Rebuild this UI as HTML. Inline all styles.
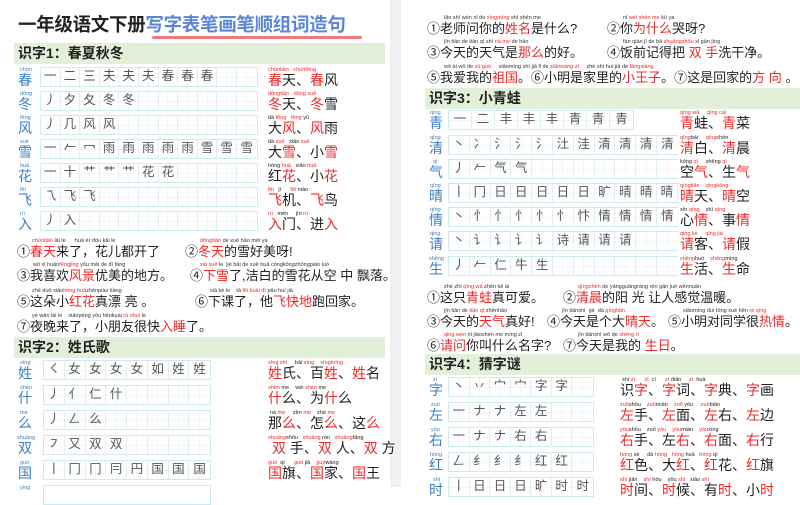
<!DOCTYPE html>
<html><head><meta charset="utf-8"><style>
*{margin:0;padding:0;box-sizing:border-box}
body{width:800px;height:487px;overflow:hidden;background:#fff;font-family:"Liberation Sans","Noto Sans CJK SC",sans-serif;position:relative;color:#222}
.a{position:absolute;white-space:nowrap}
.div{position:absolute;left:390px;top:0;width:11px;height:487px;background:#eef0f3}
.hd{position:absolute;background:#e2efd9;height:21px;font-weight:bold;font-size:14px;line-height:21px;padding-left:4px;color:#222}
.r{position:absolute;height:20px}
.py{position:absolute;top:0px;font-size:5.5px;line-height:6px;color:#3a7fc8;white-space:nowrap}
.hz{position:absolute;top:5px;font-size:14px;color:#3a7fc8;line-height:16px}
.g{position:absolute;top:0;height:20px;display:flex;border:1.5px solid #cfe9f0;background:#fff}
.g span{display:block;height:100%;border-right:1px solid #dcf0f4;font-size:12.5px;line-height:17px;text-align:center;color:#555;
background:linear-gradient(#f0f7f9,#f0f7f9) center/100% 1px no-repeat,linear-gradient(#f0f7f9,#f0f7f9) center/1px 100% no-repeat}
.w{position:absolute;top:5px;font-size:14px;line-height:16px;white-space:nowrap;color:#222}
.wp{position:absolute;top:0px;font-size:5.5px;line-height:6px;white-space:nowrap;color:#222}
.x{color:#f02828}
.s{position:absolute;font-size:13px;white-space:nowrap;line-height:16px;color:#222}
.sp{position:absolute;font-size:5.5px;white-space:nowrap;color:#333}
</style></head><body>
<div class="div"></div>

<!-- LEFT PAGE -->
<div class="a" style="left:18px;top:14px;font-size:18.5px;font-weight:bold;line-height:22px;letter-spacing:-0.3px">一年级语文下册<span style="color:#5a86d8">写字表笔画笔顺组词造句</span></div>
<div class="a" style="left:152px;top:36px;width:210px;height:3px;background:#f07a7a;border-radius:2px"></div>
<div class="hd" style="left:14px;top:43px;width:371px">识字1：春夏秋冬</div>

<div class="r" style="left:0;top:67px;width:390px"><div class="py" style="left:20px">chūn</div><div class="hz" style="left:18px">春</div>
<div class="g" style="left:40px;width:218px"><span style="width:19.6px">一</span><span style="width:19.6px">二</span><span style="width:19.6px">三</span><span style="width:19.6px">夫</span><span style="width:19.6px">夫</span><span style="width:19.6px">夫</span><span style="width:19.6px">春</span><span style="width:19.6px">春</span><span style="width:19.6px">春</span><span style="width:19.6px"></span><span style="width:19.6px;border:0"></span></div>
<div class="wp x" style="left:268px">chūntiān&nbsp;&nbsp;&nbsp;chūnfēng</div><div class="w" style="left:268px"><span class="x">春</span>天、<span class="x">春</span>风</div></div>

<div class="r" style="left:0;top:91px;width:390px"><div class="py" style="left:20px">dōng</div><div class="hz" style="left:18px">冬</div>
<div class="g" style="left:40px;width:218px"><span style="width:19.6px">丿</span><span style="width:19.6px">夕</span><span style="width:19.6px">夂</span><span style="width:19.6px">冬</span><span style="width:19.6px">冬</span><span style="width:19.6px"></span><span style="width:19.6px"></span><span style="width:19.6px"></span><span style="width:19.6px"></span><span style="width:19.6px"></span><span style="width:19.6px;border:0"></span></div>
<div class="wp x" style="left:268px">dōngtiān&nbsp;&nbsp;&nbsp;dōng xuě</div><div class="w" style="left:268px"><span class="x">冬</span>天、<span class="x">冬</span>雪</div></div>

<div class="r" style="left:0;top:115px;width:390px"><div class="py" style="left:20px">fēng</div><div class="hz" style="left:18px">风</div>
<div class="g" style="left:40px;width:218px"><span style="width:19.6px">丿</span><span style="width:19.6px">几</span><span style="width:19.6px">风</span><span style="width:19.6px">风</span><span style="width:19.6px"></span><span style="width:19.6px"></span><span style="width:19.6px"></span><span style="width:19.6px"></span><span style="width:19.6px"></span><span style="width:19.6px"></span><span style="width:19.6px;border:0"></span></div>
<div class="wp" style="left:268px">dà <span class="x">fēng</span>&nbsp;&nbsp;&nbsp;<span class="x">fēng</span> yǔ</div><div class="w" style="left:268px">大<span class="x">风</span>、<span class="x">风</span>雨</div></div>

<div class="r" style="left:0;top:139px;width:390px"><div class="py" style="left:20px">xuě</div><div class="hz" style="left:18px">雪</div>
<div class="g" style="left:40px;width:218px"><span style="width:19.6px">一</span><span style="width:19.6px">𠂉</span><span style="width:19.6px">冖</span><span style="width:19.6px">雨</span><span style="width:19.6px">雨</span><span style="width:19.6px">雨</span><span style="width:19.6px">雨</span><span style="width:19.6px">雨</span><span style="width:19.6px">雪</span><span style="width:19.6px">雪</span><span style="width:19.6px;border:0">雪</span></div>
<div class="wp" style="left:268px">dà <span class="x">xuě</span>&nbsp;&nbsp;&nbsp;xiǎo <span class="x">xuě</span></div><div class="w" style="left:268px">大<span class="x">雪</span>、小<span class="x">雪</span></div></div>

<div class="r" style="left:0;top:163px;width:390px"><div class="py" style="left:20px">huā</div><div class="hz" style="left:18px">花</div>
<div class="g" style="left:40px;width:218px"><span style="width:19.6px">一</span><span style="width:19.6px">十</span><span style="width:19.6px">艹</span><span style="width:19.6px">艹</span><span style="width:19.6px">艹</span><span style="width:19.6px">花</span><span style="width:19.6px">花</span><span style="width:19.6px"></span><span style="width:19.6px"></span><span style="width:19.6px"></span><span style="width:19.6px;border:0"></span></div>
<div class="wp" style="left:268px">hóng <span class="x">huā</span>&nbsp;&nbsp;&nbsp;xiǎo <span class="x">huā</span></div><div class="w" style="left:268px">红<span class="x">花</span>、小<span class="x">花</span></div></div>

<div class="r" style="left:0;top:187px;width:390px"><div class="py" style="left:20px">fēi</div><div class="hz" style="left:18px">飞</div>
<div class="g" style="left:40px;width:218px"><span style="width:19.6px">乁</span><span style="width:19.6px">飞</span><span style="width:19.6px">飞</span><span style="width:19.6px"></span><span style="width:19.6px"></span><span style="width:19.6px"></span><span style="width:19.6px"></span><span style="width:19.6px"></span><span style="width:19.6px"></span><span style="width:19.6px"></span><span style="width:19.6px;border:0"></span></div>
<div class="wp" style="left:268px"><span class="x">fēi</span>&nbsp;&nbsp; jī&nbsp;&nbsp;&nbsp;&nbsp;&nbsp;&nbsp;<span class="x">fēi</span> niǎo</div><div class="w" style="left:268px"><span class="x">飞</span>机、<span class="x">飞</span>鸟</div></div>

<div class="r" style="left:0;top:211px;width:390px"><div class="py" style="left:20px">rù</div><div class="hz" style="left:18px">入</div>
<div class="g" style="left:40px;width:218px"><span style="width:19.6px">丿</span><span style="width:19.6px">入</span><span style="width:19.6px"></span><span style="width:19.6px"></span><span style="width:19.6px"></span><span style="width:19.6px"></span><span style="width:19.6px"></span><span style="width:19.6px"></span><span style="width:19.6px"></span><span style="width:19.6px"></span><span style="width:19.6px;border:0"></span></div>
<div class="wp" style="left:268px"><span class="x">rù</span>&nbsp;&nbsp; mén&nbsp;&nbsp;&nbsp;&nbsp;&nbsp;jìn <span class="x">rù</span></div><div class="w" style="left:268px"><span class="x">入</span>门、进<span class="x">入</span></div></div>

<!-- left sentences -->
<div class="sp" style="left:32px;top:238px"><span class="x">chūntiān</span> lái le&nbsp;&nbsp;&nbsp;&nbsp;&nbsp;&nbsp;huā ér dōu kāi le</div>
<div class="s" style="left:17px;top:244px">①<span class="x">春天</span>来了，花儿都开了</div>
<div class="sp" style="left:200px;top:238px"><span class="x">dōngtiān</span> de xuě hǎo měi ya</div>
<div class="s" style="left:185px;top:244px">②<span class="x">冬天</span>的雪好美呀!</div>

<div class="sp" style="left:33px;top:262px">wǒ xǐ huān<span class="x">fēngjǐng</span> yōu měi de dì fāng</div>
<div class="s" style="left:17px;top:268px">③我喜欢<span class="x">风景</span>优美的地方。</div>
<div class="sp" style="left:200px;top:262px"><span class="x">xià xuě</span> le&nbsp;&nbsp;jié bái de xuě huā cóngkōngzhōngpiāo luò</div>
<div class="s" style="left:190px;top:268px">④<span class="x">下雪</span>了,洁白的雪花从空 中 飘落。</div>

<div class="sp" style="left:32px;top:288px">zhè duǒ xiǎo<span class="x">hóng huā</span>zhēnpiào liàng</div>
<div class="s" style="left:17px;top:294px">⑤这朵小<span class="x">红花</span>真漂 亮 。</div>
<div class="sp" style="left:210px;top:288px">xià kè le&nbsp;&nbsp;&nbsp;&nbsp;tā <span class="x">fēi kuài dì</span> pǎo huí jiā</div>
<div class="s" style="left:195px;top:294px">⑥下课了，他<span class="x">飞快地</span>跑回家。</div>

<div class="sp" style="left:32px;top:313px">yè wǎn lái le&nbsp;&nbsp;&nbsp;&nbsp;xiǎopéng yǒu hěnkuài <span class="x">rù shuì</span> le</div>
<div class="s" style="left:17px;top:319px">⑦夜晚来了，小朋友很快<span class="x">入睡</span>了。</div>

<div class="hd" style="left:14px;top:337px;width:371px">识字2：姓氏歌</div>

<div class="r" style="left:0;top:360px;width:390px"><div class="py" style="left:20px">xìng</div><div class="hz" style="left:18px">姓</div>
<div class="g" style="left:43px;width:168px"><span style="width:20.8px">㇛</span><span style="width:20.8px">女</span><span style="width:20.8px">女</span><span style="width:20.8px">女</span><span style="width:20.8px">女</span><span style="width:20.8px">如</span><span style="width:20.8px">姓</span><span style="width:20.8px;border:0">姓</span></div>
<div class="wp x" style="left:268px">xìng shì&nbsp;&nbsp;&nbsp;&nbsp;&nbsp;<span style="color:#222">bǎi</span> xìng&nbsp;&nbsp;&nbsp;&nbsp;xìngmíng</div><div class="w" style="left:268px"><span class="x">姓</span>氏、百<span class="x">姓</span>、<span class="x">姓</span>名</div></div>

<div class="r" style="left:0;top:385px;width:390px"><div class="py" style="left:20px">shén</div><div class="hz" style="left:18px">什</div>
<div class="g" style="left:43px;width:168px"><span style="width:20.8px">丿</span><span style="width:20.8px">亻</span><span style="width:20.8px">仁</span><span style="width:20.8px">什</span><span style="width:20.8px"></span><span style="width:20.8px"></span><span style="width:20.8px"></span><span style="width:20.8px;border:0"></span></div>
<div class="wp" style="left:268px"><span class="x">shén</span> me&nbsp;&nbsp;&nbsp;&nbsp;wèi <span class="x">shén</span> me</div><div class="w" style="left:268px"><span class="x">什</span>么、为<span class="x">什</span>么</div></div>

<div class="r" style="left:0;top:410px;width:390px"><div class="py" style="left:20px">me</div><div class="hz" style="left:18px">么</div>
<div class="g" style="left:43px;width:168px"><span style="width:20.8px">丿</span><span style="width:20.8px">𠃋</span><span style="width:20.8px">么</span><span style="width:20.8px"></span><span style="width:20.8px"></span><span style="width:20.8px"></span><span style="width:20.8px"></span><span style="width:20.8px;border:0"></span></div>
<div class="wp" style="left:270px">nà <span class="x">me</span>&nbsp;&nbsp;&nbsp;&nbsp;&nbsp;zěn <span class="x">me</span>&nbsp;&nbsp;&nbsp;&nbsp;zhè <span class="x">me</span></div><div class="w" style="left:268px">那<span class="x">么</span>、怎<span class="x">么</span>、这<span class="x">么</span></div></div>

<div class="r" style="left:0;top:435px;width:390px"><div class="py" style="left:17px">shuāng</div><div class="hz" style="left:18px">双</div>
<div class="g" style="left:43px;width:168px"><span style="width:20.8px">㇇</span><span style="width:20.8px">又</span><span style="width:20.8px">双</span><span style="width:20.8px">双</span><span style="width:20.8px"></span><span style="width:20.8px"></span><span style="width:20.8px"></span><span style="width:20.8px;border:0"></span></div>
<div class="wp" style="left:268px"><span class="x">shuāng</span>shǒu&nbsp;&nbsp;&nbsp;<span class="x">shuāng</span> rén&nbsp;&nbsp;&nbsp;<span class="x">shuāng</span>fāng</div><div class="w" style="left:272px"><span class="x">双</span> 手、<span class="x">双</span> 人、<span class="x">双</span> 方</div></div>

<div class="r" style="left:0;top:460px;width:390px"><div class="py" style="left:20px">guó</div><div class="hz" style="left:18px">国</div>
<div class="g" style="left:43px;width:168px"><span style="width:20.8px">丨</span><span style="width:20.8px">冂</span><span style="width:20.8px">冂</span><span style="width:20.8px">冃</span><span style="width:20.8px">円</span><span style="width:20.8px">国</span><span style="width:20.8px">国</span><span style="width:20.8px;border:0">国</span></div>
<div class="wp" style="left:268px"><span class="x">guó</span>&nbsp;&nbsp;qí&nbsp;&nbsp;&nbsp;&nbsp;&nbsp;&nbsp;<span class="x">guó</span> jiā&nbsp;&nbsp;&nbsp;&nbsp;<span class="x">guó</span>wáng</div><div class="w" style="left:268px"><span class="x">国</span>旗、<span class="x">国</span>家、<span class="x">国</span>王</div></div>

<div class="r" style="left:0;top:485px;width:390px"><div class="py" style="left:20px">yǐng</div>
<div class="g" style="left:43px;width:168px"></div></div>

<!-- RIGHT PAGE -->
<div class="sp" style="left:444px;top:15px">lǎo shī wèn nǐ de <span class="x">xìngmíng</span> shì shén me</div>
<div class="s" style="left:427px;top:21px">①老师问你的<span class="x">姓名</span>是什么?</div>
<div class="sp" style="left:623px;top:15px">nǐ <span class="x">wèi shén me</span> kū ya</div>
<div class="s" style="left:607px;top:21px">②你<span class="x">为什么</span>哭呀?</div>

<div class="sp" style="left:444px;top:39px">jīn tiān de tiān qì shì <span class="x">nà me</span> de hǎo</div>
<div class="s" style="left:427px;top:45px">③今天的天气是<span class="x">那么</span>的好。</div>
<div class="sp" style="left:623px;top:39px">fàn qián jì de bǎ <span class="x">shuāngshǒu</span> xǐ gān jìng</div>
<div class="s" style="left:607px;top:45px">④饭前记得把 <span class="x">双 手</span>洗干净。</div>

<div class="sp" style="left:444px;top:64px">wǒ ài wǒ de <span class="x">zǔ guó</span>&nbsp;&nbsp;&nbsp;&nbsp;&nbsp;xiǎomíng shì jiā lǐ de <span class="x">xiǎowáng zǐ</span>&nbsp;&nbsp;&nbsp;&nbsp;&nbsp;zhè shì huí jiā de <span class="x">fāngxiàng</span></div>
<div class="s" style="left:427px;top:70px">⑤我爱我的<span class="x">祖国</span>。⑥小明是家里的<span class="x">小王子</span>。⑦这是回家的<span class="x">方 向</span> 。</div>

<div class="hd" style="left:425px;top:88px;width:375px">识字3：小青蛙</div>

<div class="r" style="left:400px;top:110px;width:400px"><div class="py" style="left:30px">qīng</div><div class="hz" style="left:29px">青</div>
<div class="g" style="left:48px;width:186px"><span style="width:23px">一</span><span style="width:23px">二</span><span style="width:23px">丰</span><span style="width:23px">丰</span><span style="width:23px">丰</span><span style="width:23px">青</span><span style="width:23px">青</span><span style="width:23px;border:0">青</span></div>
<div class="wp x" style="left:280px">qīng wā&nbsp;&nbsp;&nbsp;&nbsp;&nbsp;qīng cài</div><div class="w" style="left:280px"><span class="x">青</span>蛙、<span class="x">青</span>菜</div></div>

<div class="r" style="left:400px;top:135px;width:400px"><div class="py" style="left:30px">qīng</div><div class="hz" style="left:29px">清</div>
<div class="g" style="left:48px;width:230px;border-right:0"><span style="width:20.8px">丶</span><span style="width:20.8px">冫</span><span style="width:20.8px">氵</span><span style="width:20.8px">氵</span><span style="width:20.8px">氵</span><span style="width:20.8px">汢</span><span style="width:20.8px">洼</span><span style="width:20.8px">清</span><span style="width:20.8px">清</span><span style="width:20.8px">清</span><span style="width:20.8px;border:0">清</span></div>
<div class="wp" style="left:280px"><span class="x">qīng</span>bái&nbsp;&nbsp;&nbsp;&nbsp;&nbsp;<span class="x">qīng</span>chén</div><div class="w" style="left:280px"><span class="x">清</span>白、<span class="x">清</span>晨</div></div>

<div class="r" style="left:400px;top:159px;width:400px"><div class="py" style="left:33px">qì</div><div class="hz" style="left:29px">气</div>
<div class="g" style="left:48px;width:230px;border-right:0"><span style="width:20.8px">丿</span><span style="width:20.8px">𠂉</span><span style="width:20.8px">气</span><span style="width:20.8px">气</span><span style="width:20.8px"></span><span style="width:20.8px"></span><span style="width:20.8px"></span><span style="width:20.8px"></span><span style="width:20.8px"></span><span style="width:20.8px"></span><span style="width:20.8px;border:0"></span></div>
<div class="wp" style="left:280px">kōng <span class="x">qì</span>&nbsp;&nbsp;&nbsp;&nbsp;&nbsp;shēng <span class="x">qì</span></div><div class="w" style="left:280px">空<span class="x">气</span>、生<span class="x">气</span></div></div>

<div class="r" style="left:400px;top:183px;width:400px"><div class="py" style="left:30px">qíng</div><div class="hz" style="left:29px">晴</div>
<div class="g" style="left:48px;width:232px;border-right:0"><span style="width:20.8px">丨</span><span style="width:20.8px">冂</span><span style="width:20.8px">日</span><span style="width:20.8px">日</span><span style="width:20.8px">日</span><span style="width:20.8px">日</span><span style="width:20.8px">日</span><span style="width:20.8px">旷</span><span style="width:20.8px">晴</span><span style="width:20.8px">晴</span><span style="width:20.8px">晴</span></div>
<div class="wp x" style="left:280px">qíngtiān&nbsp;&nbsp;&nbsp;&nbsp;qíngkōng</div><div class="w" style="left:280px"><span class="x">晴</span>天、<span class="x">晴</span>空</div></div>

<div class="r" style="left:400px;top:207px;width:400px"><div class="py" style="left:30px">qíng</div><div class="hz" style="left:29px">情</div>
<div class="g" style="left:48px;width:230px;border-right:0"><span style="width:20.8px">丶</span><span style="width:20.8px">忄</span><span style="width:20.8px">忄</span><span style="width:20.8px">忄</span><span style="width:20.8px">忄</span><span style="width:20.8px">忄</span><span style="width:20.8px">忭</span><span style="width:20.8px">情</span><span style="width:20.8px">情</span><span style="width:20.8px">情</span><span style="width:20.8px;border:0">情</span></div>
<div class="wp" style="left:280px">xīn <span class="x">qíng</span>&nbsp;&nbsp;&nbsp;&nbsp;shì <span class="x">qíng</span></div><div class="w" style="left:280px">心<span class="x">情</span>、事<span class="x">情</span></div></div>

<div class="r" style="left:400px;top:231px;width:400px"><div class="py" style="left:30px">qǐng</div><div class="hz" style="left:29px">请</div>
<div class="g" style="left:48px;width:230px;border-right:0"><span style="width:20.8px">丶</span><span style="width:20.8px">讠</span><span style="width:20.8px">讠</span><span style="width:20.8px">讠</span><span style="width:20.8px">讠</span><span style="width:20.8px">诗</span><span style="width:20.8px">请</span><span style="width:20.8px">请</span><span style="width:20.8px">请</span><span style="width:20.8px"></span><span style="width:20.8px;border:0"></span></div>
<div class="wp x" style="left:280px">qǐng kè&nbsp;&nbsp;&nbsp;&nbsp;&nbsp;qǐng jià</div><div class="w" style="left:280px"><span class="x">请</span>客、<span class="x">请</span>假</div></div>

<div class="r" style="left:400px;top:256px;width:400px"><div class="py" style="left:29px">shēng</div><div class="hz" style="left:29px">生</div>
<div class="g" style="left:48px;width:230px;border-right:0"><span style="width:20.8px">丿</span><span style="width:20.8px">𠂉</span><span style="width:20.8px">仁</span><span style="width:20.8px">牛</span><span style="width:20.8px">生</span><span style="width:20.8px"></span><span style="width:20.8px"></span><span style="width:20.8px"></span><span style="width:20.8px"></span><span style="width:20.8px"></span><span style="width:20.8px;border:0"></span></div>
<div class="wp" style="left:280px"><span class="x">shēng</span>huó&nbsp;&nbsp;&nbsp;&nbsp;<span class="x">shēng</span>mìng</div><div class="w" style="left:280px"><span class="x">生</span>活、<span class="x">生</span>命</div></div>

<div class="sp" style="left:444px;top:284px">zhè zhī <span class="x">qīng wā</span> zhēn kě ài</div>
<div class="s" style="left:427px;top:290px">①这只<span class="x">青蛙</span>真可爱。</div>
<div class="sp" style="left:578px;top:284px"><span class="x">qīngchén</span> de yángguāngràng rén gǎn jué wēnnuǎn</div>
<div class="s" style="left:563px;top:290px">②<span class="x">清晨</span>的阳 光 让人感觉温暖。</div>

<div class="sp" style="left:444px;top:308px">jīn tiān de <span class="x">tiān qì</span> zhēnhǎo</div>
<div class="s" style="left:427px;top:314px">③今天的<span class="x">天气</span>真好!</div>
<div class="sp" style="left:562px;top:308px">jīn tiānshì&nbsp;&nbsp;gè&nbsp;&nbsp;dà <span class="x">qíngtiān</span></div>
<div class="s" style="left:547px;top:314px">④今天是个大<span class="x">晴天</span>。</div>
<div class="sp" style="left:683px;top:308px">xiǎomíng duì tóng xué hěn <span class="x">rè qíng</span></div>
<div class="s" style="left:668px;top:314px">⑤小明对同学很<span class="x">热情</span>。</div>

<div class="sp" style="left:444px;top:332px"><span class="x">qǐng wèn</span> nǐ jiàoshén me míng zì</div>
<div class="s" style="left:427px;top:338px">⑥<span class="x">请问</span>你叫什么名字?</div>
<div class="sp" style="left:578px;top:332px">jīn tiānshì wǒ de <span class="x">shēng rì</span></div>
<div class="s" style="left:563px;top:338px">⑦今天是我的 <span class="x">生日</span>。</div>

<div class="hd" style="left:425px;top:354px;width:375px">识字4：猜字谜</div>

<div class="r" style="left:400px;top:377px;width:400px"><div class="py" style="left:33px">zì</div><div class="hz" style="left:29px">字</div>
<div class="g" style="left:48px;width:146px"><span style="width:20.6px">丶</span><span style="width:20.6px">丷</span><span style="width:20.6px">宀</span><span style="width:20.6px">宀</span><span style="width:20.6px">字</span><span style="width:20.6px">字</span><span style="width:20.6px;border:0"></span></div>
<div class="wp" style="left:222px">shí <span class="x">zì</span>&nbsp;&nbsp;&nbsp;&nbsp;&nbsp;&nbsp;<span class="x">zì</span>&nbsp;&nbsp;cí&nbsp;&nbsp;&nbsp;&nbsp;&nbsp;&nbsp;<span class="x">zì</span> diǎn&nbsp;&nbsp;&nbsp;&nbsp;&nbsp;<span class="x">zì</span>&nbsp;&nbsp;huà</div><div class="w" style="left:220px">识<span class="x">字</span>、<span class="x">字</span>词、<span class="x">字</span>典、<span class="x">字</span>画</div></div>

<div class="r" style="left:400px;top:402px;width:400px"><div class="py" style="left:31px">zuǒ</div><div class="hz" style="left:29px">左</div>
<div class="g" style="left:48px;width:146px"><span style="width:20.6px">一</span><span style="width:20.6px">ナ</span><span style="width:20.6px">ナ</span><span style="width:20.6px">左</span><span style="width:20.6px">左</span><span style="width:20.6px"></span><span style="width:20.6px;border:0"></span></div>
<div class="wp" style="left:220px"><span class="x">zuǒ</span>shǒu&nbsp;&nbsp;&nbsp;&nbsp;<span class="x">zuǒ</span>miàn&nbsp;&nbsp;&nbsp;&nbsp;<span class="x">zuǒ</span> yòu&nbsp;&nbsp;&nbsp;&nbsp;&nbsp;<span class="x">zuǒ</span>biān</div><div class="w" style="left:220px"><span class="x">左</span>手、<span class="x">左</span>面、<span class="x">左</span>右、<span class="x">左</span>边</div></div>

<div class="r" style="left:400px;top:427px;width:400px"><div class="py" style="left:31px">yòu</div><div class="hz" style="left:29px">右</div>
<div class="g" style="left:48px;width:146px"><span style="width:20.6px">一</span><span style="width:20.6px">ナ</span><span style="width:20.6px">ナ</span><span style="width:20.6px">右</span><span style="width:20.6px">右</span><span style="width:20.6px"></span><span style="width:20.6px;border:0"></span></div>
<div class="wp" style="left:220px"><span class="x">yòu</span>shǒu&nbsp;&nbsp;&nbsp;&nbsp;zuǒ <span class="x">yòu</span>&nbsp;&nbsp;&nbsp;&nbsp;<span class="x">yòu</span>miàn&nbsp;&nbsp;&nbsp;&nbsp;<span class="x">yòu</span>xíng</div><div class="w" style="left:220px"><span class="x">右</span>手、左<span class="x">右</span>、<span class="x">右</span>面、<span class="x">右</span>行</div></div>

<div class="r" style="left:400px;top:452px;width:400px"><div class="py" style="left:30px">hóng</div><div class="hz" style="left:29px">红</div>
<div class="g" style="left:48px;width:146px"><span style="width:20.6px">𠃋</span><span style="width:20.6px">纟</span><span style="width:20.6px">纟</span><span style="width:20.6px">纟</span><span style="width:20.6px">红</span><span style="width:20.6px">红</span><span style="width:20.6px;border:0"></span></div>
<div class="wp" style="left:220px"><span class="x">hóng</span> sè&nbsp;&nbsp;&nbsp;&nbsp;&nbsp;dà <span class="x">hóng</span>&nbsp;&nbsp;&nbsp;<span class="x">hóng</span> huā&nbsp;&nbsp;&nbsp;<span class="x">hóng</span> qí</div><div class="w" style="left:220px"><span class="x">红</span>色、大<span class="x">红</span>、<span class="x">红</span>花、<span class="x">红</span>旗</div></div>

<div class="r" style="left:400px;top:477px;width:400px"><div class="py" style="left:33px">shí</div><div class="hz" style="left:29px">时</div>
<div class="g" style="left:48px;width:146px"><span style="width:20.6px">丨</span><span style="width:20.6px">日</span><span style="width:20.6px">日</span><span style="width:20.6px">日</span><span style="width:20.6px">旷</span><span style="width:20.6px">时</span><span style="width:20.6px;border:0">时</span></div>
<div class="wp" style="left:220px"><span class="x">shí</span> jiān&nbsp;&nbsp;&nbsp;&nbsp;<span class="x">shí</span> hòu&nbsp;&nbsp;&nbsp;&nbsp;yǒu <span class="x">shí</span>&nbsp;&nbsp;&nbsp;xiǎo <span class="x">shí</span></div><div class="w" style="left:220px"><span class="x">时</span>间、<span class="x">时</span>候、有<span class="x">时</span>、小<span class="x">时</span></div></div>
</body></html>
